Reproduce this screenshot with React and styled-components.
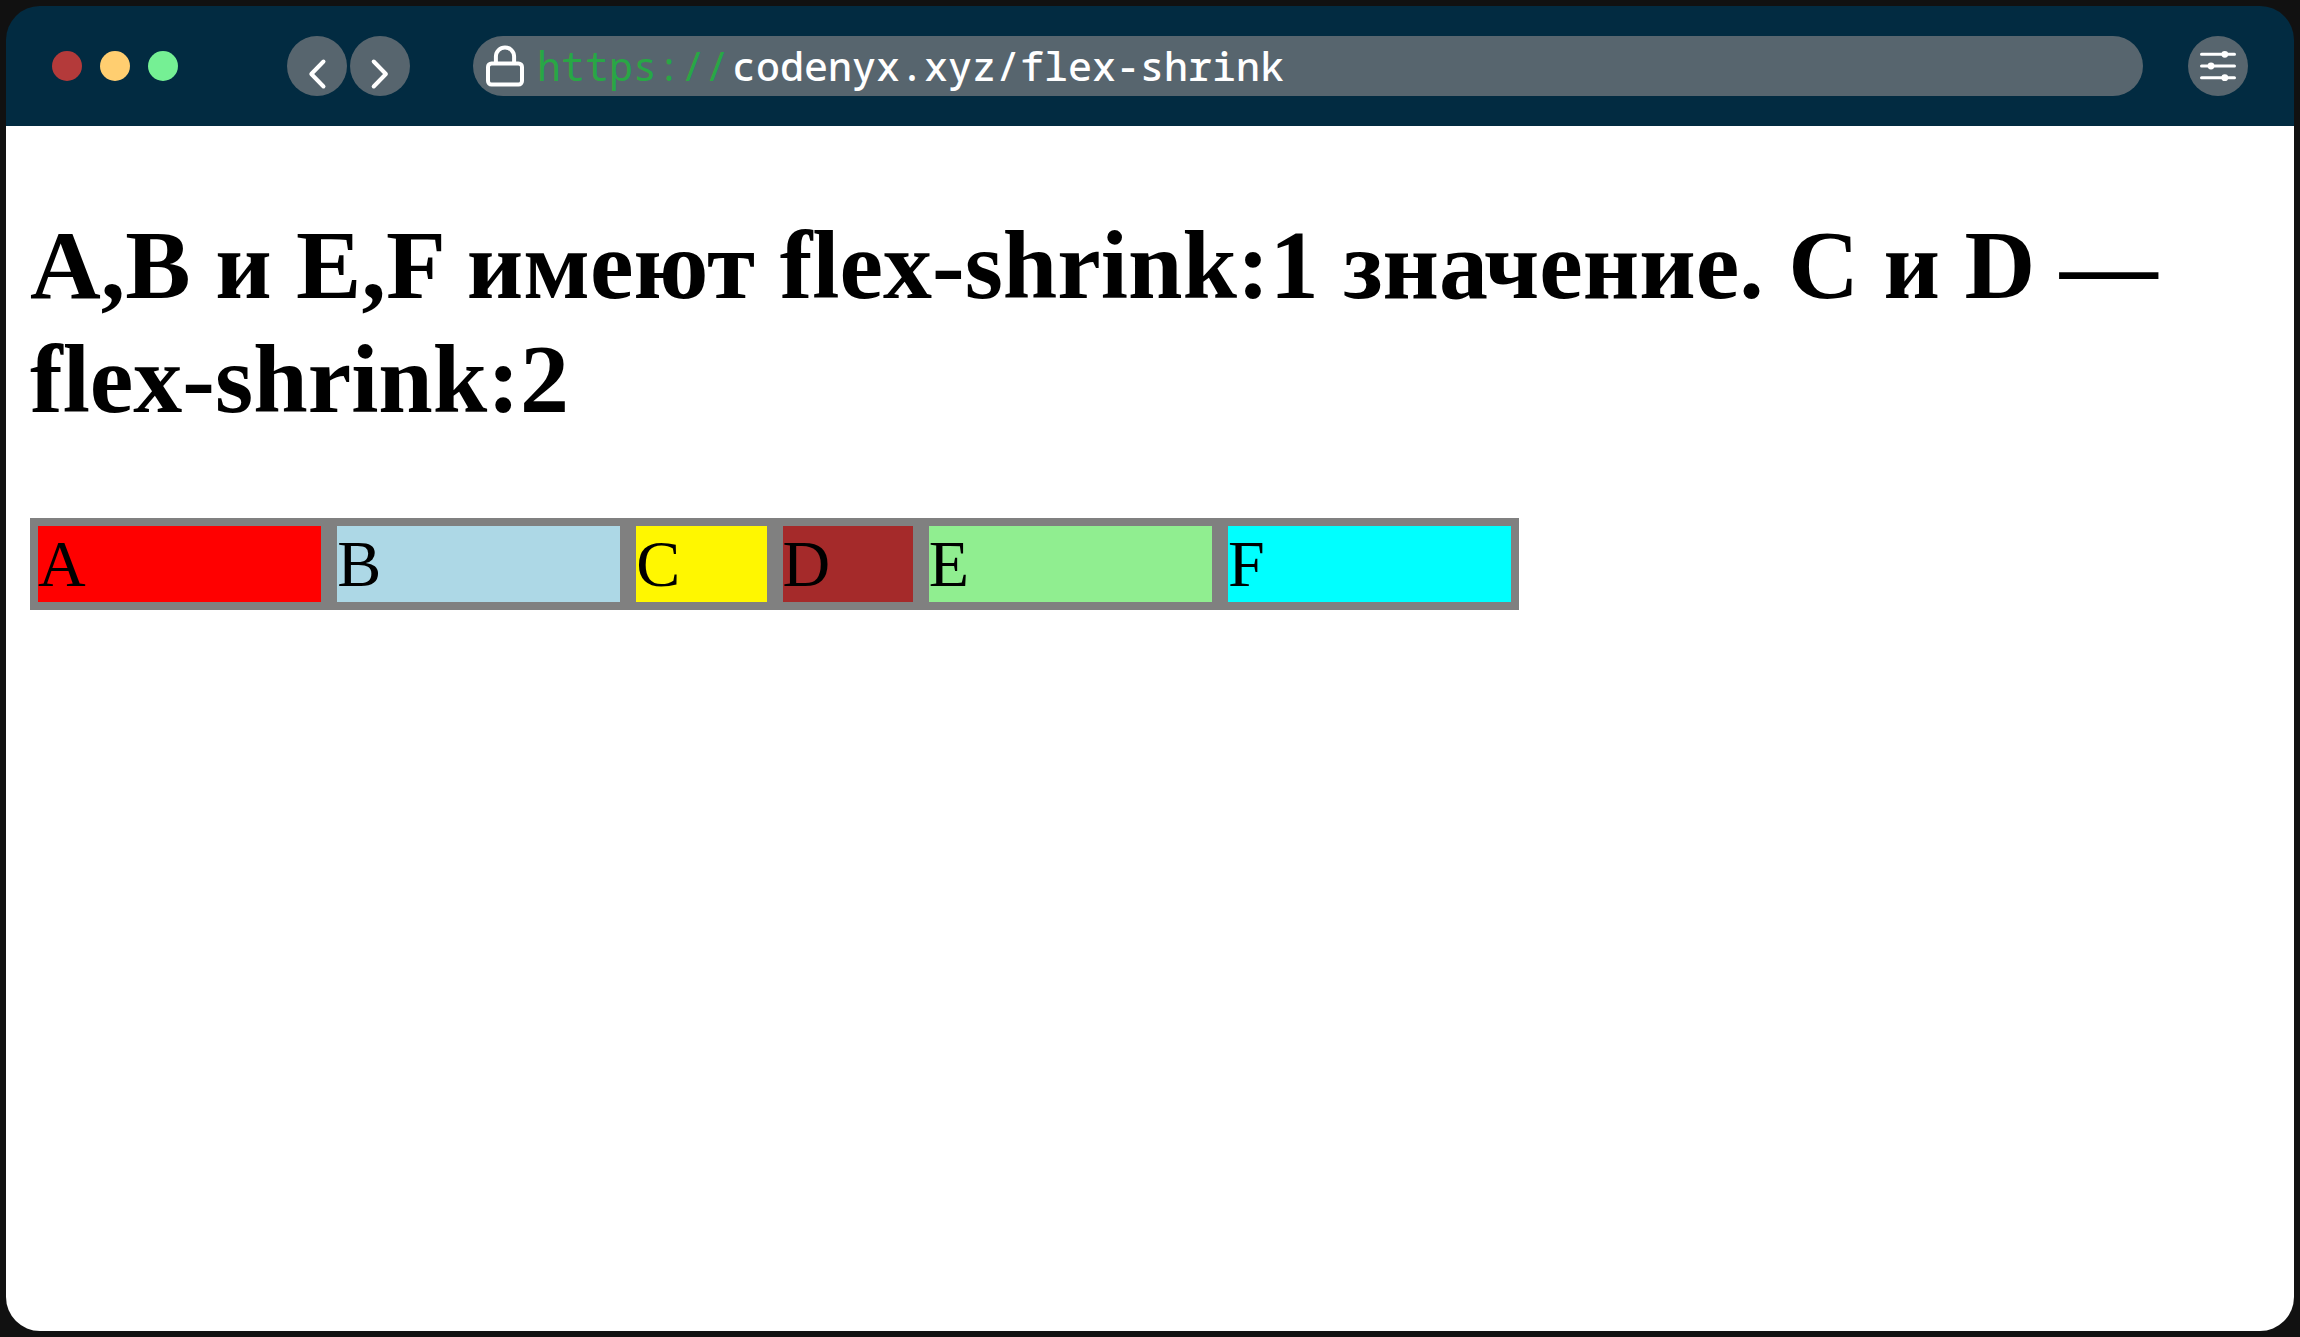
import React from "react";
import styled, { createGlobalStyle } from "styled-components";

const GlobalStyle = createGlobalStyle`
  *, *::before, *::after { box-sizing: border-box; }
  body { margin: 0; background: #111111; }
`;

const Backdrop = styled.div`
  display: flex;
  min-height: 100vh;
  padding: 6px;
  background: #111111;
`;

const Window = styled.div`
  display: flex;
  flex: 1;
  flex-direction: column;
  min-width: 0;
  overflow: hidden;
  border-radius: 34px;
  background: linear-gradient(#022b41 120px, #ffffff 120px);
`;

const TitleBar = styled.header`
  display: flex;
  align-items: center;
  height: 120px;
  padding: 0 46px;
`;

const Lights = styled.div`
  display: flex;
  gap: 18px;
  margin-right: 109px;
`;

const Light = styled.span`
  width: 30px;
  height: 30px;
  border-radius: 50%;
  background: ${(p) => p.$color};
`;

const NavButtons = styled.nav`
  display: flex;
  gap: 3px;
  margin-right: 63px;
`;

const RoundButton = styled.button`
  display: block;
  flex: none;
  width: 60px;
  height: 60px;
  padding: 0;
  border: 0;
  border-radius: 50%;
  background: #57656e;
  cursor: pointer;
`;

const Icon = styled.svg`
  display: block;
  flex: none;
  fill: none;
  stroke: #ffffff;
  stroke-width: ${(p) => p.$stroke}px;
  stroke-linecap: round;
  stroke-linejoin: round;
`;

const AddressBar = styled.div`
  display: flex;
  flex: 1;
  align-items: center;
  min-width: 0;
  height: 60px;
  margin-right: 45px;
  padding: 0 13px;
  border-radius: 30px;
  background: #57656e;
  font: 500 40px/60px "Noto Sans Mono", "DejaVu Sans Mono", "Liberation Mono", monospace;
`;

const Scheme = styled.label`
  margin: 0 3px 0 13px;
  color: #28a745;
  font-weight: 400;
`;

const Address = styled.input`
  flex: 1;
  min-width: 0;
  height: 60px;
  padding: 0;
  border: 0;
  outline: 0;
  background: transparent;
  color: #ffffff;
  font: inherit;
`;

const Page = styled.main`
  flex: 1;
  padding: 82px 24px;
  color: #000000;
  font: 66px/76px "Liberation Serif", "Times New Roman", serif;
`;

const Heading = styled.h2`
  margin: 0 0 82px;
  font-size: 98px;
  line-height: 114px;
  font-weight: 700;
`;

const FlexDemo = styled.div`
  display: flex;
  max-width: 1489px;
  background: #808080;
`;

const Item = styled.div`
  flex: 0 ${(p) => p.$shrink} 436px;
  min-width: 0;
  margin: 8px;
  background: ${(p) => p.$color};
`;

const lights = ["#b43a3a", "#ffce70", "#75f094"];

const items = [
  { name: "A", color: "red", shrink: 1 },
  { name: "B", color: "lightblue", shrink: 1 },
  { name: "C", color: "#fff700", shrink: 2 },
  { name: "D", color: "brown", shrink: 2 },
  { name: "E", color: "lightgreen", shrink: 1 },
  { name: "F", color: "cyan", shrink: 1 },
];

export default function App() {
  return (
    <Backdrop>
      <GlobalStyle />
      <Window>
        <TitleBar>
          <Lights>
            {lights.map((color) => (
              <Light key={color} $color={color} />
            ))}
          </Lights>
          <NavButtons>
            <RoundButton type="button" aria-label="Назад">
              <Icon $stroke={4} width="60" height="60" viewBox="0 0 60 60">
                <path d="M36.5 25.5 24.3 38 36.5 50.5" />
              </Icon>
            </RoundButton>
            <RoundButton type="button" aria-label="Вперёд">
              <Icon $stroke={4} width="60" height="60" viewBox="0 0 60 60">
                <path d="M23.7 25.5 35.9 38 23.7 50.5" />
              </Icon>
            </RoundButton>
          </NavButtons>
          <AddressBar>
            <Icon $stroke={4} width="38" height="42" viewBox="0 0 38 42">
              <rect x="2" y="18.5" width="34" height="21" rx="3.5" />
              <path d="M9.9 18V11.5a9.1 9.1 0 0 1 18.2 0V18" />
            </Icon>
            <Scheme htmlFor="address">https://</Scheme>
            <Address id="address" type="text" spellCheck="false" defaultValue="codenyx.xyz/flex-shrink" />
          </AddressBar>
          <RoundButton type="button" aria-label="Настройки">
            <Icon $stroke={3} width="60" height="60" viewBox="0 0 60 60">
              <path d="M13.5 18.3h33M13.5 30h33M13.5 41.7h33" />
              <g fill="#ffffff" stroke="none">
                <circle cx="36.8" cy="18.3" r="3.4" />
                <circle cx="23" cy="30" r="3.4" />
                <circle cx="36.8" cy="41.7" r="3.4" />
              </g>
            </Icon>
          </RoundButton>
        </TitleBar>
        <Page>
          <Heading>A,B и E,F имеют flex-shrink:1 значение. C и D — flex-shrink:2</Heading>
          <FlexDemo>
            {items.map((item) => (
              <Item key={item.name} $color={item.color} $shrink={item.shrink}>
                {item.name}
              </Item>
            ))}
          </FlexDemo>
        </Page>
      </Window>
    </Backdrop>
  );
}
